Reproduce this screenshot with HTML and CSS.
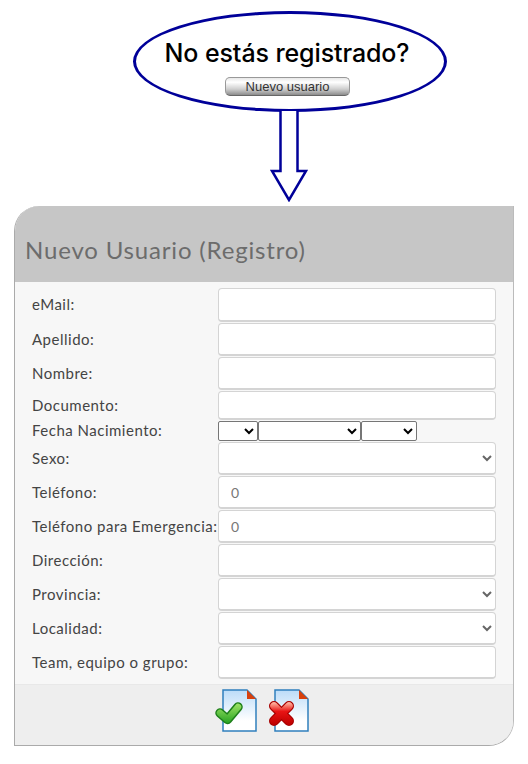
FILE: index.html
```html
<!DOCTYPE html>
<html lang="es">
<head>
  <meta charset="UTF-8" />
  <meta name="viewport" content="width=device-width, initial-scale=1.0" />
  <title>Nuevo Usuario</title>
  <link rel="stylesheet" href="styles.css">
</head>
<body>
  <div class="bubble">
    <h2>No estás registrado?</h2>
    <button type="button" class="btn-new">Nuevo usuario</button>
  </div>

  <svg class="arrow" width="38" height="91" viewBox="0 0 38 91">
    <path d="M10.5 0V60H2L19 89L36 60H27.5V0" fill="#fff" stroke="#000099" stroke-width="2.5"/>
  </svg>

  <div class="card">
    <div class="card-head"><h1>Nuevo Usuario (Registro)</h1></div>

    <form class="form-grid">
      <label>eMail:</label>
      <input type="text">
      <label>Apellido:</label>
      <input type="text">
      <label>Nombre:</label>
      <input type="text">
      <label>Documento:</label>
      <input type="text" class="short">
      <label class="date-label">Fecha Nacimiento:</label>
      <div class="date-row">
        <select class="d-day"><option></option></select>
        <select class="d-month"><option></option></select>
        <select class="d-year"><option></option></select>
      </div>
      <label>Sexo:</label>
      <div class="select-wrap"><select><option></option></select></div>
      <label>Teléfono:</label>
      <input type="text" value="0">
      <label>Teléfono para Emergencia:</label>
      <input type="text" value="0">
      <label>Dirección:</label>
      <input type="text">
      <label>Provincia:</label>
      <div class="select-wrap"><select><option></option></select></div>
      <label>Localidad:</label>
      <div class="select-wrap"><select><option></option></select></div>
      <label>Team, equipo o grupo:</label>
      <input type="text">
    </form>

    <div class="card-foot">
      <svg class="doc-icon" width="44" height="44" viewBox="0 0 44 44">
        <defs>
          <linearGradient id="docFill" x1="0" y1="0" x2="0" y2="1">
            <stop offset="0" stop-color="#bcdcf8"/>
            <stop offset="0.75" stop-color="#ffffff"/>
          </linearGradient>
          <linearGradient id="okFill" gradientUnits="userSpaceOnUse" x1="0" y1="16" x2="0" y2="36">
            <stop offset="0" stop-color="#9be264"/>
            <stop offset="1" stop-color="#22a01e"/>
          </linearGradient>
        </defs>
        <path d="M9 2H33L42 11V43H9Z" fill="url(#docFill)" stroke="#2f7fbd" stroke-width="1.5"/>
        <path d="M33 2L42 11H33Z" fill="#d8400c"/>
        <path d="M6 25L13.5 31.5L24 19" fill="none" stroke="#1d7f1a" stroke-width="9.5" stroke-linecap="round" stroke-linejoin="round"/>
        <path d="M6 25L13.5 31.5L24 19" fill="none" stroke="url(#okFill)" stroke-width="6.5" stroke-linecap="round" stroke-linejoin="round"/>
      </svg>
      <svg class="doc-icon" width="44" height="44" viewBox="0 0 44 44">
        <defs>
          <linearGradient id="docFill2" x1="0" y1="0" x2="0" y2="1">
            <stop offset="0" stop-color="#bcdcf8"/>
            <stop offset="0.75" stop-color="#ffffff"/>
          </linearGradient>
          <linearGradient id="noFill" gradientUnits="userSpaceOnUse" x1="0" y1="15" x2="0" y2="36">
            <stop offset="0" stop-color="#ffb09c"/>
            <stop offset="0.4" stop-color="#e81414"/>
            <stop offset="1" stop-color="#c00000"/>
          </linearGradient>
        </defs>
        <path d="M9 2H33L42 11V43H9Z" fill="url(#docFill2)" stroke="#2f7fbd" stroke-width="1.5"/>
        <path d="M33 2L42 11H33Z" fill="#d8400c"/>
        <path d="M8 18L23 33M23 18L8 33" fill="none" stroke="#a80000" stroke-width="10" stroke-linecap="round"/>
        <path d="M8 18L23 33M23 18L8 33" fill="none" stroke="url(#noFill)" stroke-width="7.5" stroke-linecap="round"/>
      </svg>
    </div>
  </div>
</body>
</html>
```

FILE: styles.css
```css
body { margin: 0; background: #fff; font-family: "Lato", Arial, sans-serif; }
.bubble { box-sizing: border-box; width: 314px; height: 101px; margin: 11px 0 0 133px; border: 3px solid #000099; border-radius: 50%; background: #fff; text-align: center; padding-top: 24px; }
.bubble h2 { margin: 0 0 9px; padding-right: 6px; font-family: "Inter", Arial, sans-serif; font-size: 25px; line-height: 30px; font-weight: 500; letter-spacing: -0.1px; color: #000; }
.btn-new { display: block; box-sizing: border-box; width: 125px; height: 19px; margin: 0 0 0 89px; padding: 0; border: 1px solid #999; border-bottom-color: #666; border-radius: 5px; background: linear-gradient(to bottom, #e8e8e8, #ffffff 25%, #cfcfcf 65%, #8c8c8c); font-family: "Liberation Sans", Arial, sans-serif; font-size: 13px; line-height: 15px; color: #333; }
.arrow { display: block; margin: -1px 0 0 270px; }
.card { margin: 4px 14px 0; width: 500px; box-sizing: border-box; border: 1px solid #aaa; border-right-color: #bbb; border-top: 0; border-radius: 25px 0 25px 0; overflow: hidden; background: #f7f7f7; }
.card-head { height: 76px; background: #c6c6c6; display: flex; align-items: flex-end; box-sizing: border-box; padding: 0 0 17px 10px; }
.card-head h1 { margin: 0; font-family: "Lato", Arial, sans-serif; font-size: 24px; line-height: 30px; font-weight: 400; color: #6c6c6c; letter-spacing: 0.83px; }
.form-grid { display: grid; grid-template-columns: 203px 278px; padding: 6px 0 5px 0; row-gap: 1px; align-items: center; }
.form-grid label { padding-left: 17px; margin-bottom: 2px; font-size: 15px; letter-spacing: 0.5px; color: #444; white-space: nowrap; }
.form-grid input { box-sizing: border-box; width: 278px; height: 33px; margin: 0; padding: 6px 12px; border: 1px solid #d4d4d4; border-bottom: 2px solid #d4d4d4; border-radius: 4px; background: #fff; font-family: "Lato", Arial, sans-serif; font-size: 14px; color: #777; }
.form-grid input:first-of-type { height: 34px; }
.form-grid input.short { height: 29px; }
.date-row { display: flex; height: 20px; }
.date-row select { box-sizing: border-box; height: 20px; margin: 0; border: 1px solid #767676; border-radius: 2px; background: #fff; color: #000; }
.d-day { width: 40px; }
.d-month { width: 103px; }
.d-year { width: 56px; }
.select-wrap select { box-sizing: border-box; width: 278px; height: 33px; margin: 0; padding: 0 8px; border: 1px solid #d4d4d4; border-bottom: 2px solid #d4d4d4; border-radius: 4px; background: #fff; color: #666; display: block; }
.card-foot { height: 61px; background: #eee; display: flex; justify-content: center; gap: 8px; align-items: flex-start; border-top: 1px solid #e8e8e8; box-sizing: border-box; padding: 3px 4px 0 0; }
.doc-icon { display: block; }
```
